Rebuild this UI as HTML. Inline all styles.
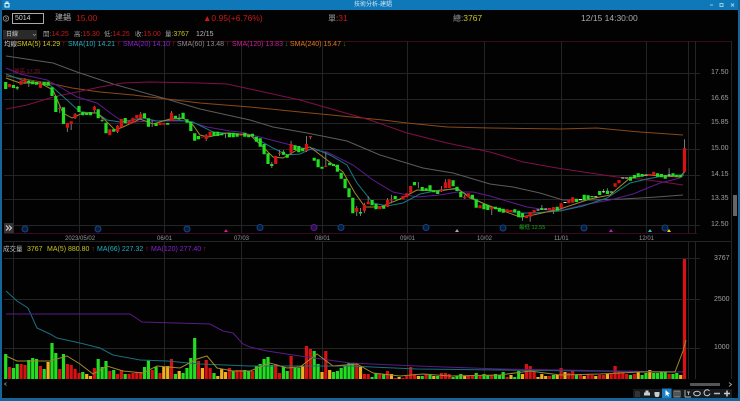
<!DOCTYPE html>
<html><head><meta charset="utf-8"><style>
html,body{margin:0;padding:0;background:#000}
#w{position:relative;width:740px;height:401px;overflow:hidden;background:#020202;font-family:"Liberation Sans","Noto Sans CJK TC",sans-serif;font-size:7px;color:#a0a0a0;filter:blur(.3px)}
#w div.t{position:absolute;white-space:nowrap;line-height:10px}
.r{color:#c81818}.y{color:#c8c81e}
.l{font-size:6.5px}
svg{position:absolute;left:0;top:0}
svg path{fill:none}
.gd{stroke:#242424;stroke-width:1}
.wk{stroke:#777;stroke-width:1}
.G{stroke:#22dd22;stroke-width:3.2}
.R{stroke:#d81212;stroke-width:3.2}
.Y{stroke:#eeb020;stroke-width:3.2}
.D{stroke:#cfe8cf;stroke-width:3}
.m{stroke-width:1}
</style></head><body><div id="w">
<svg width="740" height="401" viewBox="0 0 740 401">
<rect x="0" y="0" width="740" height="10" fill="#0f78b8"/>
<rect x="0" y="0" width="2" height="401" fill="#13659c"/>
<rect x="738" y="0" width="2" height="401" fill="#13659c"/>
<rect x="0" y="398" width="740" height="3" fill="#13659c"/>
<path d="M5 3.500h4v3.500h-4zM6 3.500v-1.500h2v1.500" stroke="#dff" stroke-width="1"/>
<path d="M710 5h3" stroke="#9cd" stroke-width="1"/><path d="M720 3.500h3v3h-3z" stroke="#9cd" stroke-width="1"/><path d="M731 3.500l3 3M734 3.500l-3 3" stroke="#9cd" stroke-width="1"/>
<circle cx="6" cy="18.500" r="2.700" stroke="#999" stroke-width=".8" fill="none"/><path d="M5.300 17l1.700 1.500-1.700 1.500" stroke="#999" stroke-width=".6"/>
<rect x="12.500" y="13.500" width="31" height="10" stroke="#aaa" stroke-width="1" fill="#000"/>
<rect x="3" y="30" width="34" height="9.500" fill="#2a2a2a"/>
<path d="M33 34l1.500 1.500 1.500-1.500" stroke="#999" stroke-width=".7"/>
<!-- frame -->
<path d="M4 41.500H731.500" stroke="#3a0c16" stroke-width="1"/>
<path d="M4 233.500H697" stroke="#3a0a24" stroke-width="1"/>
<path d="M695.500 41V233M731.500 41V379M688.500 41V233M688.500 241V379M695.500 241V379" stroke="#242424" stroke-width="1"/>
<path class="gd" d="M4 73.500H700M4 99.500H700M4 123.500H700M4 149.500H700M4 175.500H700M4 199.500H700M4 225.500H700M13.500 41V233M79.500 41V233M164.500 41V233M241.500 41V233M322.500 41V233M407.500 41V233M484.500 41V233M561.500 41V233M646.500 41V233M4 241.500H731M4 258.500H700M4 299.500H700M4 348.500H700M13.500 241V379M79.500 241V379M164.500 241V379M241.500 241V379M322.500 241V379M407.500 241V379M484.500 241V379M561.500 241V379M646.500 241V379"/>
<!-- MA lines main -->
<path class="m" stroke="#5c5c5c" d="M6 56L53 63 77 72 113 84 163 98 200 109 250 120 273 127 307 133 347 141 380 155 423 168 453 173 490 184 513 187 540 193 563 200 590 200 623 199 657 197 683 195"/>
<path class="m" stroke="#8a4a18" d="M6 76L30 80 58 85 72 88 100 92 133 95 167 99 200 103 250 107 300 112 383 120 407 123 447 127 490 128 560 129 597 128 640 132 683 135"/>
<path class="m" stroke="#801045" d="M6 109L27 105 53 97 77 92 100 87 123 83 150 82 200 83 227 84 250 89 300 100 370 120 407 133 447 143 490 152 523 162 557 168 590 173 617 177 640 179 663 182 683 185"/>
<path class="m" stroke="#601a90" d="M6 68L20 74 47 80 60 87 77 97 97 103 113 115 125 123 147 121 173 121 187 121 207 127 230 131 240 132 260 137 283 143 307 149 327 152 353 165 373 180 393 192 417 197 440 195 457 192 473 192 490 196 510 202 527 207 547 210 563 210 583 205 610 200 633 194 660 183 680 178 684 173"/>
<path class="m" stroke="#187a84" d="M6 74L27 82 50 85 67 100 80 112 97 113 107 120 120 122 143 118 157 121 177 120 193 122 213 132 250 135 273 148 287 155 300 154 313 148 330 155 347 165 357 183 373 203 387 206 403 203 420 194 440 190 457 189 473 198 490 207 517 213 533 213 560 211 583 206 607 198 630 183 647 179 663 176 684 175"/>
<path class="m" stroke="#a08a2a" d="M6 78L20 83 40 83 53 90 63 113 72 118 83 113 97 113 107 122 115 130 123 127 140 119 153 124 170 119 183 118 193 125 200 135 208 137 227 133 250 135 263 147 273 157 283 158 297 150 310 147 327 160 343 172 355 193 365 207 380 207 400 199 417 190 440 191 457 188 470 198 490 206 520 217 533 215 560 209 590 199 610 195 630 178 647 175 663 176 680 177 684 172"/>
<!-- wicks -->
<path class="wk" d="M17.200 86V90M25 78V84M28.800 80V87M40.400 81.700V88M59.700 105V113M67.400 127V132M71.200 124V130M75.100 113V119M94.400 105.700V113M102.100 118V122M117.500 125V133M140.700 112V119M152.200 120V127M171.500 111V121M179.200 114V120M206.200 134V141M225.500 133V138M271.800 162V168M279.500 150V156M283.400 150V155M291.100 140.700V155M306.500 136V152M310.400 137V139.300M325.800 152V167M356.700 206V216M360.500 208V216M364.400 202.700V213M368.200 196V204M387.500 198V207M391.400 194.700V203.300M418.400 182V188.300M441.500 186V192M445.400 179.300V188M464.700 195V199M491.700 207V215M522.500 213V220.700M530.200 212V221.700M541.800 205V210M553.400 207V214M603.500 189V193M607.400 188.300V194M669.100 168.300V177.300M684.500 139.300V172.700"/>
<!-- green candles -->
<path class="G" d="M5.700 82V89M13.400 85V88M17.200 87V88.500M28.800 80.700V83.300M32.700 81.300V84.300M36.500 82V84.700M44.200 81.700V85.300M48.100 81.700V85.700M52 87.300V96M55.800 96V112M63.500 107.300V124M79 106V112M82.800 111.700V115.300M86.700 113V115M90.500 112V115.300M98.200 109.300V118.300M102.100 120V120.700M106 122.700V133.300M113.700 129.300V131.700M125.200 118V123.300M144.500 113.300V118.300M148.400 118.300V126.700M156.100 123.300V126M167.700 123V124.700M175.400 115.700V118M179.200 117.700V119.300M183.100 112.700V119M187 119.300V122.700M190.800 121.700V131M194.700 133.300V140.700M198.500 136V139.300M214 131.700V136M217.800 131.700V136M221.700 133.300V135.300M229.400 132.700V137.300M233.200 132.700V137.300M237.100 133.300V136.700M244.800 132.700V136.700M248.700 135V137.300M252.500 133.700V136.300M256.400 136.700V141.700M260.200 138.300V146.700M264.100 144V154.300M268 153.300V164M271.800 164V166M283.400 151.700V154.700M287.200 154.300V157.700M295 145.300V150M298.800 146V152.300M302.700 148.300V151.300M314.200 157.700V160.700M318.100 159.300V167.300M322 166.700V168.700M329.700 162.700V165.300M333.500 164V166M337.400 164.700V171.700M341.200 172.700V178.700M345.100 178.700V188.300M349 188.300V197.300M352.800 197.700V213.300M360.500 212V213.500M372.100 200V205.300M376 204V209.300M383.700 206V208.700M395.200 196V199.300M399.100 199V199.800M414.500 182V185.300M422.200 187V191M426.100 188.300V190.700M430 185.300V191.300M433.800 190.300V192.300M437.700 190.700V194M453.100 180.300V186.300M457 186.700V191M460.800 192V197.300M472.400 194.700V198.700M476.200 199.300V207.700M484 204V209.300M487.800 205V210M495.500 206.700V209.300M499.400 207.700V211.700M503.200 208.700V212.700M514.800 209.300V212M518.700 210.700V217.300M522.500 213.300V217.300M541.800 208V210M557.200 206.700V210.700M576.500 198.700V202M584.200 194.700V200M588.100 195.300V199.300M592 196V197.300M599.700 191V195M607.400 190.700V194M630.500 176.700V180.700M634.400 175V178.300M638.200 173.300V177.300M642.100 174V176.700M657.500 173.300V176.700M661.400 174V177.300M665.200 175V178.700M673 173.300V176M676.800 174.700V176.700M680.700 174.700V177.300"/>
<!-- red candles -->
<path class="R" d="M9.500 84V87.300M21.100 80.700V84.700M25 79.300V82.300M40.400 83.300V87.700M59.700 108V109M67.400 123V127.700M71.200 121.300V124M75.100 114.300V118.300M94.400 106.700V110.300M109.800 129.300V135.300M117.500 125.700V131.700M121.400 119V127.300M129.100 120.700V124M133 117.700V122.700M136.800 115V118.300M140.700 114.300V118.300M160 122.700V125M163.800 123.300V124.700M171.500 112.700V121M202.400 136.700V137.500M206.200 135.300V139M210.100 131.700V136M241 134.700V135.700M275.700 156V164M279.500 153.300V154M291.100 144V152.700M306.500 144V150.700M310.400 136V137.300M325.800 165.700V166.700M356.700 208V211.700M364.400 205V210.700M368.200 201.700V204.300M379.800 206V209.300M387.500 200V206.700M391.400 199.500V200.500M403 196V199.300M406.800 193.300V197.300M410.700 186V192.700M441.500 189.300V191.300M445.400 182.300V188.300M449.200 179.300V188M464.700 196.700V198.300M468.500 193.300V197.300M480.100 205.300V208.300M491.700 207.300V209.300M507.100 209.300V212M511 210V212M526.400 216V218M530.200 212V216.700M534.100 210V212.700M549.500 208V210M553.400 207.300V210M561.100 203.300V208M568.800 200V203.300M572.700 197.300V202.700M615.100 183.300V186.700M619 180V183.300M649.800 174V175.700M653.700 171.700V175.300M684.500 148.300V171.700"/>
<path class="D" d="M538 209.500V210.500M545.700 208.500V209.500M565 202V203M580.400 199V200M595.800 196.200V197.200M603.500 191.200V192.200M611.200 191.500V192.500M622.800 177.500V178.500M626.700 177.500V178.500M646 174.500V175.500M669.100 174.500V175.500"/>
<!-- markers -->
<g stroke="#164488" stroke-width="1" fill="#081c3c"><circle cx="25" cy="229" r="3"/><circle cx="98" cy="229" r="3"/><circle cx="187" cy="229" r="3"/><circle cx="260" cy="227.500" r="3"/><circle cx="341" cy="227.500" r="3"/><circle cx="426" cy="227.500" r="3"/><circle cx="503" cy="228" r="3"/><circle cx="584" cy="228" r="3"/><circle cx="665" cy="228" r="3"/></g>
<circle cx="314" cy="227.500" r="3" fill="#2a1050" stroke="#5a1c90"/>
<path d="M224 232l2-3 2 3z" style="fill:#d81a8c"/><path d="M609 232l2-3 2 3z" style="fill:#b820c8"/><path d="M648 232l2-3 2 3z" style="fill:#20c8d8"/><path d="M667 232l2-3 2 3z" style="fill:#e8d820"/><path d="M455 232l2-3 2 3z" style="fill:#aaa"/>
<rect x="4" y="223" width="9.500" height="10" fill="#333"/>
<path d="M6 225.500l2.500 2.500-2.500 2.500M9 225.500l2.500 2.500-2.500 2.500" stroke="#ddd" stroke-width="1"/>
<rect x="733" y="195" width="4" height="21" fill="#666"/>
<!-- volume bars green -->
<path class="G" d="M5.700 354V379M13.400 368V379M17.200 364V379M28.800 360V379M32.700 358V379M36.500 359V379M44.200 369V379M52 343V379M55.800 353V379M63.500 354V379M82.800 372V379M98.200 359V379M102.100 367V379M106 361V379M113.700 370V379M125.200 374V379M144.500 367V379M148.400 360V379M156.100 367V379M175.400 374V379M183.100 373V379M187 368V379M190.800 358V379M194.700 338V379M214 373V379M233.200 371V379M244.800 370V379M248.700 371V379M256.400 366V379M260.200 364V379M264.100 359V379M268 357V379M271.800 365V379M283.400 367V379M287.200 371V379M295 368V379M298.800 368V379M314.200 351V379M318.100 364V379M333.500 372V379M337.400 371V379M341.200 368V379M345.100 366V379M349 363V379M352.800 363V379M372.100 377V379M376 373V379M383.700 374V379M422.200 376V379M430 375V379M437.700 376V379M453.100 377V379M457 376V379M460.800 374V379M476.200 373V379M484 374V379M487.800 375V379M495.500 374V379M499.400 375V379M503.200 372V379M514.800 377V379M518.700 371V379M553.400 375V379M576.500 375V379M630.500 375V379M642.100 375V379M646 373V379M653.700 373V379M657.500 373V379M661.400 372V379M665.200 372V379M673 374V379M676.800 373V379"/>
<path class="R" d="M9.500 367V379M21.100 364V379M25 365V379M40.400 366V379M59.700 369V379M67.400 364V379M71.200 365V379M75.100 369V379M79 373V379M94.400 368V379M109.800 371V379M117.500 374V379M121.400 370V379M129.100 374V379M133 373V379M136.800 372V379M140.700 372V379M152.200 370V379M160 373V379M171.500 359V379M198.500 361V379M206.200 360V379M210.100 368V379M229.400 368V379M237.100 370V379M241 370V379M252.500 371V379M275.700 364V379M279.500 373V379M291.100 356V379M306.500 346V379M310.400 349V379M325.800 351V379M356.700 364V379M364.400 374V379M368.200 374V379M379.800 374V379M387.500 371V379M395.200 378V379M403 378V379M406.800 376V379M410.700 367V379M414.500 374V379M426.100 374V379M441.500 373V379M445.400 373V379M449.200 374V379M468.500 376V379M472.400 375V379M480.100 376V379M491.700 375V379M507.100 377V379M526.400 364V379M530.200 366V379M534.100 372V379M549.500 376V379M561.100 368V379M568.800 373V379M572.700 370V379M580.400 374V379M588.100 374V379M592 375V379M599.700 375V379M603.500 375V379M611.200 374V379M615.100 366V379M619 371V379M622.800 372V379M626.700 374V379M634.400 374V379M669.100 374V379M684.500 259V379"/>
<path class="Y" d="M48.100 362V379M86.700 374V379M90.500 376V379M163.800 367V379M167.700 366V379M179.200 371V379M202.400 368V379M217.800 376V379M221.700 369V379M225.500 372V379M302.700 366V379M322 372V379M329.700 370V379M360.500 367V379M391.400 374V379M399.100 377V379M418.400 376V379M433.800 376V379M464.700 376V379M511 375V379M522.500 374V379M538 377V379M541.800 374V379M545.700 376V379M557.200 375V379M565 372V379M584.200 376V379M595.800 376V379M607.400 374V379M638.200 372V379M649.800 370V379M680.700 375V379"/>
<!-- volume MAs -->
<path class="m" stroke="#187080" d="M6 291L17 301 28 308 37 328 50 334 57 338 80 343 100 348 113 355 140 360 167 361 200 364 250 366 350 366 417 369 500 370 683 372"/>
<path class="m" stroke="#5c1a88" d="M6 314H130L142 322 210 324 223 331 233 333 243 344 250 347 267 351 300 356 350 363 417 366 500 369 682 372"/>
<path class="m" stroke="#a08a2c" d="M6 356L17 361 33 361 50 361 67 356 80 364 93 374 107 366 123 371 143 373 157 366 180 368 197 359 207 356 217 368 233 371 250 371 270 363 287 368 300 367 317 354 333 366 357 364 373 373 400 376 423 374 450 376 500 375 530 371 560 375 600 374 640 372 675 372 683 351 686 340"/>
<!-- scrollbar + toolbar -->
<rect x="690" y="383" width="30" height="3" fill="#555"/>
<path d="M729 382.500l2.500 2-2.500 2" stroke="#999" stroke-width="1"/>
<rect x="633" y="389" width="99" height="9" fill="#161b20"/>
<rect x="662" y="388.500" width="9.500" height="9.500" fill="#1a80c8"/>
<path d="M635 391h4l1 1v5h-5z" style="fill:#333"/>
<path d="M644 392.500h6v3h-6zM645.500 390.500h3v2h-3z" style="fill:#ccc"/>
<path d="M654.500 392h5v3l-1 2h-3l-1-2z" style="fill:#ccc"/>
<path d="M665.500 390v6l1.500-1.500 1 2 1-.5-1-2h2z" style="fill:#fff"/>
<path d="M674 391h6v6h-6zM676 391v6M678 391v6" stroke="#aaa" stroke-width=".8"/>
<path d="M685 390v7M685 397h6M687 392h3M688.500 392v3" stroke="#bbb" stroke-width=".9"/>
<ellipse cx="697" cy="393.500" rx="3.300" ry="2.300" stroke="#ccc" stroke-width="1" fill="none"/>
<path d="M709.500 391a3 3 0 1 0 .5 2.500" stroke="#ccc" stroke-width="1"/>
<path d="M714 393.500h6" stroke="#bbb" stroke-width="1.500"/>
<path d="M724 393.500h6M727 390.500v6" stroke="#ccc" stroke-width="1.500"/>
<path d="M6.500 382.500l-2 1.500 2 1.500" stroke="#888" stroke-width=".8"/>
</svg>

<div class="t" style="left:354px;top:0;font-size:6px;color:#cfe6f5">技術分析-建錩</div>
<div class="t" style="left:15px;top:14px;font-size:7px;color:#ccc">5014</div>
<div class="t" style="left:55px;top:13px;font-size:8px;color:#b0b0b0">建錩</div>
<div class="t r" style="left:76px;top:13px;font-size:8.500px">15.00</div>
<div class="t r" style="left:203px;top:13px;font-size:8.500px">▲0.95(+6.76%)</div>
<div class="t" style="left:328px;top:13px;font-size:8px;color:#999">單:<span class="r" style="font-size:8.500px">31</span></div>
<div class="t" style="left:453px;top:13px;font-size:8px;color:#999">總:<span class="y" style="font-size:8.500px">3767</span></div>
<div class="t" style="left:581px;top:13px;font-size:8.500px;color:#aaa">12/15 14:30:00</div>

<div class="t" style="left:6px;top:30px;font-size:6px;color:#ccc">日線</div>
<div class="t" style="left:43px;top:30px"><span class="l">開:</span><span class="r">14.25</span></div>
<div class="t" style="left:74px;top:30px"><span class="l">高:</span><span class="r">15.30</span></div>
<div class="t" style="left:104px;top:30px"><span class="l">低:</span><span class="r">14.25</span></div>
<div class="t" style="left:135px;top:30px"><span class="l">收:</span><span class="r">15.00</span></div>
<div class="t" style="left:165px;top:30px"><span class="l">量:</span><span class="y">3767</span></div>
<div class="t" style="left:196px;top:30px;color:#bbb">12/15</div>

<div class="t l" style="left:4px;top:40px;color:#ccc">均線:</div>
<div class="t" style="left:17px;top:40px;color:#c8c81e">SMA(5) 14.29 <span class="r">↑</span></div>
<div class="t" style="left:68px;top:40px;color:#20b0c0">SMA(10) 14.21 <span class="r">↑</span></div>
<div class="t" style="left:123px;top:40px;color:#8a20d0">SMA(20) 14.10 <span class="r">↑</span></div>
<div class="t" style="left:177px;top:40px;color:#8c8c8c">SMA(60) 13.48 <span class="r">↑</span></div>
<div class="t" style="left:232px;top:40px;color:#c81e98">SMA(120) 13.83 <span style="color:#1e9a1e">↓</span></div>
<div class="t" style="left:290px;top:40px;color:#e07818">SMA(240) 15.47 <span style="color:#1e9a1e">↓</span></div>

<div class="t" style="left:14px;top:67px;font-size:5.500px;color:#8a1030">最高 17.35</div>
<div class="t" style="left:519px;top:223px;font-size:5.500px;color:#1fa81f">最低 12.55</div>

<div class="t" style="left:711px;top:68px">17.50</div>
<div class="t" style="left:711px;top:94px">16.65</div>
<div class="t" style="left:711px;top:118px">15.85</div>
<div class="t" style="left:711px;top:144px">15.00</div>
<div class="t" style="left:711px;top:170px">14.15</div>
<div class="t" style="left:711px;top:194px">13.35</div>
<div class="t" style="left:711px;top:220px">12.50</div>

<div class="t" style="left:65px;top:234px;font-size:6px;color:#999">2023/05/02</div>
<div class="t" style="left:157px;top:234px;font-size:6px;color:#999">06/01</div>
<div class="t" style="left:234px;top:234px;font-size:6px;color:#999">07/03</div>
<div class="t" style="left:315px;top:234px;font-size:6px;color:#999">08/01</div>
<div class="t" style="left:400px;top:234px;font-size:6px;color:#999">09/01</div>
<div class="t" style="left:477px;top:234px;font-size:6px;color:#999">10/02</div>
<div class="t" style="left:554px;top:234px;font-size:6px;color:#999">11/01</div>
<div class="t" style="left:639px;top:234px;font-size:6px;color:#999">12/01</div>

<div class="t l" style="left:3px;top:245px;color:#bbb">成交量</div>
<div class="t y" style="left:27px;top:245px">3767</div>
<div class="t y" style="left:47px;top:245px">MA(5) 880.80 <span class="r">↑</span></div>
<div class="t" style="left:97px;top:245px;color:#20b0c0">MA(66) 227.32 <span class="r">↑</span></div>
<div class="t" style="left:151px;top:245px;color:#8a20d0">MA(120) 277.40 <span class="r">↑</span></div>

<div class="t" style="left:714px;top:254px">3767</div>
<div class="t" style="left:714px;top:295px">2500</div>
<div class="t" style="left:714px;top:343px">1000</div>
</div></body></html>
